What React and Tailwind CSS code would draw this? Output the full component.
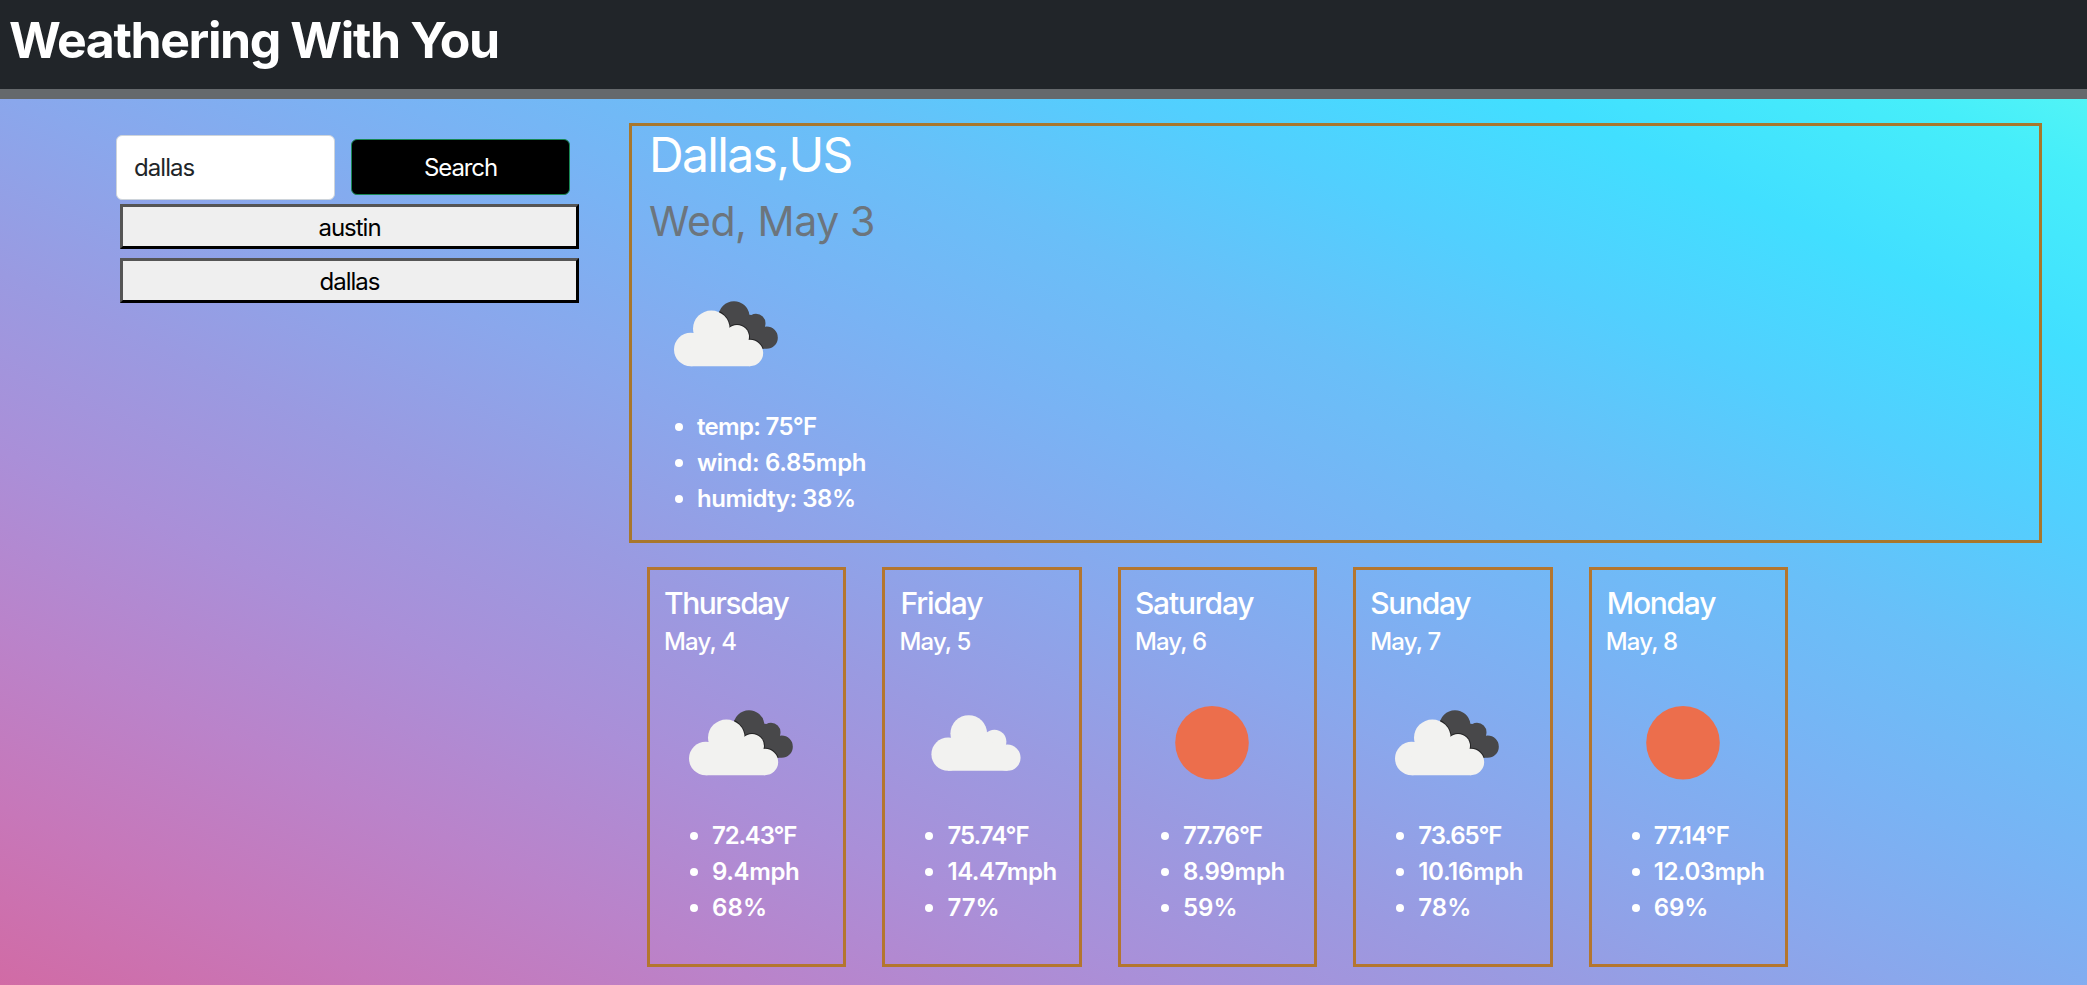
const days = [
  { day: "Thursday", dayCls: "-ml-px tracking-[-1.45px]", date: "May, 4", icon: "broken", rows: [["72.43°F", "tracking-[-1.19px]"], ["9.4mph", "tracking-[-0.38px]"], ["68%", "tracking-[0.1px]"]] },
  { day: "Friday", dayCls: "tracking-[-1.15px]", date: "May, 5", icon: "cloud", rows: [["75.74°F", "tracking-[-0.99px]"], ["14.47mph", "tracking-[-0.45px]"], ["77%", "tracking-[-0.06px]"]] },
  { day: "Saturday", dayCls: "-ml-px tracking-[-1.2px]", date: "May, 6", icon: "sun", rows: [["77.76°F", "tracking-[-1.01px]"], ["8.99mph", "tracking-[-0.31px]"], ["59%", "tracking-[0.1px]"]] },
  { day: "Sunday", dayCls: "-ml-px tracking-[-1.35px]", date: "May, 7", icon: "broken", rows: [["73.65°F", "tracking-[-1.09px]"], ["10.16mph", "tracking-[-0.35px]"], ["78%", "tracking-[0.07px]"]] },
  { day: "Monday", dayCls: "tracking-[-1.25px]", date: "May, 8", icon: "sun", rows: [["77.14°F", "tracking-[-0.84px]"], ["12.03mph", "tracking-[-0.47px]"], ["69%", "tracking-[-0.1px]"]] },
];

const current = [
  ["temp: 75°F", "tracking-[-0.7px]"],
  ["wind: 6.85mph", "tracking-[-0.3px]"],
  ["humidty: 38%", "tracking-[-0.46px]"],
];

function CloudShape() {
  return (
    <>
      <circle cx="289" cy="563.5" r="55" />
      <circle cx="227" cy="625.5" r="50" />
      <circle cx="366" cy="588" r="36" />
      <circle cx="405" cy="636" r="39.5" />
      <path d="M227 620 L262 575 L330 580 L385 600 L420 620 L405 675.5 L227 675.5 Z" />
    </>
  );
}

function WeatherIcon({ kind, id }) {
  return (
    <svg className="block h-[150px] w-[150px]" viewBox="0 0 150 150">
      {kind === "sun" && <circle cx="76" cy="74.7" r="36.8" fill="#ec6e4c" />}
      {kind === "cloud" && (
        <g transform="translate(-27.6 -122.3) scale(0.33333)" fill="#f2f2f0">
          <CloudShape />
        </g>
      )}
      {kind === "broken" && (
        <g transform="translate(-35 -118) scale(0.33333)">
          <clipPath id={id}>
            <circle cx="357" cy="527" r="46.5" />
            <circle cx="423" cy="547" r="28.5" />
            <circle cx="455" cy="590" r="33.5" />
            <path d="M320 555 L395 520 L430 525 L450 560 L470 600 L455 623 L430 623 L370 590 Z" />
          </clipPath>
          <g clipPath={`url(#${id})`}>
            <rect x="300" y="470" width="200" height="170" fill="#48484a" />
            <g fill="#232324" stroke="#232324" strokeWidth="6">
              <CloudShape />
            </g>
          </g>
          <g fill="#f2f2f0">
            <CloudShape />
          </g>
        </g>
      )}
    </svg>
  );
}

function Readings({ rows }) {
  return (
    <ul className="pl-[47px] text-[24px] leading-9 font-semibold">
      {rows.map(([text, cls]) => (
        <li key={text} className="relative whitespace-nowrap">
          <span className="absolute top-[14px] -left-[22px] size-2 rounded-full bg-white" />
          <span className={cls}>{text}</span>
        </li>
      ))}
    </ul>
  );
}

export default function App() {
  return (
    <div className="h-[985px] overflow-hidden bg-[linear-gradient(25deg,#d16ba5,#c777b9,#ba83ca,#aa8fd8,#9a9ae1,#8aa7ec,#79b3f4,#69bff8,#52cffe,#41dfff,#46eefa,#5ffbf1)] font-['Inter',sans-serif] text-white">
      <header className="h-[99px] border-b-[10px] border-[#65696c] bg-[#212529] pt-[10px] pl-[9px]">
        <h1 className="text-[50px] leading-[60px] font-bold tracking-[-1.41px] whitespace-nowrap">Weathering With You</h1>
      </header>
      <div className="flex">
        <aside className="w-[629px] pt-9 pl-[116px]">
          <form className="flex items-center gap-4" onSubmit={(e) => e.preventDefault()}>
            <input
              defaultValue="dallas"
              className="h-[65px] w-[219px] rounded-md border border-[#ced4da] bg-white px-[17px] text-[24px] tracking-[-0.95px] text-[#212529] outline-none"
            />
            <button className="mb-px h-14 w-[219px] rounded-md border border-[#198754] bg-black pt-[2px] text-[24px] tracking-[-1.09px]">Search</button>
          </form>
          <div className="mt-1 ml-1 flex w-[459px] flex-col gap-[9px] text-[24px] tracking-[-1px] text-black">
            <button className="h-[45px] border-[3px] border-t-[#555] border-r-black border-b-black border-l-[#555] bg-[#efefef] pt-[3px] leading-9">austin</button>
            <button className="h-[45px] border-[3px] border-t-[#555] border-r-black border-b-black border-l-[#555] bg-[#efefef] pt-[3px] leading-9">dallas</button>
          </div>
        </aside>
        <main className="w-[1413px] pt-6">
          <section className="h-[420px] border-[3px] border-[#a8772c] pl-[18px]">
            <h2 className="-ml-px text-[48px] leading-[58px] tracking-[-1.65px]">Dallas,US</h2>
            <h3 className="mt-[12px] -ml-px text-[41px] leading-[50px] tracking-[-0.41px] text-[#6c757d]">Wed, May 3</h3>
            <div className="mt-[13px]">
              <WeatherIcon kind="broken" id="now" />
            </div>
            <Readings rows={current} />
          </section>
          <div className="mt-6 ml-[18px] flex gap-9">
            {days.map((d) => (
              <section key={d.day} className="h-[400px] w-[199.45px] shrink-0 border-[3px] border-[#b4762e] pt-[15px] pl-[15px]">
                <h4 className="text-[30px] leading-[36px] font-medium">
                  <span className={d.dayCls}>{d.day}</span>
                </h4>
                <p className="mt-[3px] -ml-px text-[24px] leading-9 font-medium tracking-[-0.85px]">{d.date}</p>
                <div className="mt-2">
                  <WeatherIcon kind={d.icon} id={d.day} />
                </div>
                <Readings rows={d.rows} />
              </section>
            ))}
          </div>
        </main>
      </div>
    </div>
  );
}
